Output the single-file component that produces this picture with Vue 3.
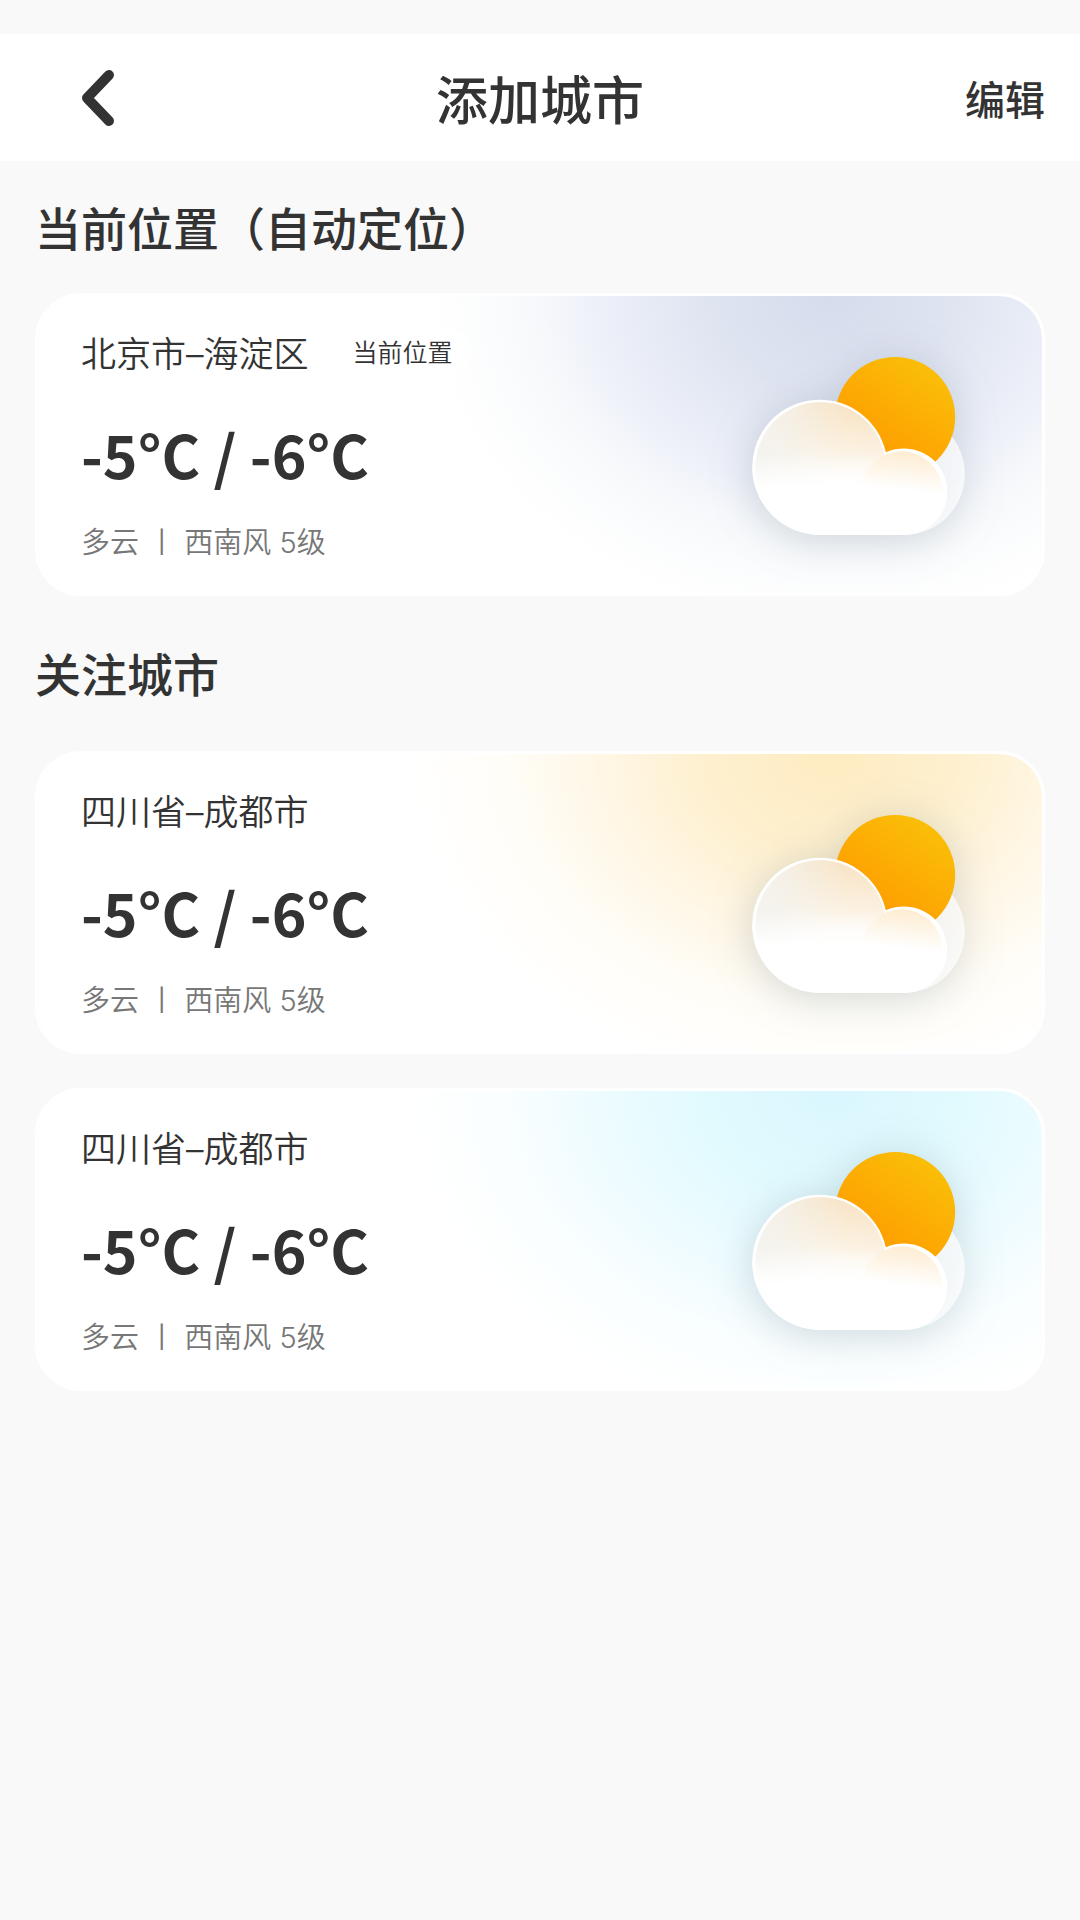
<script setup>
import { ref } from 'vue'

const currentCity = ref({
  id: 1,
  name: '北京市–海淀区',
  temp: '-5°C / -6°C',
  weather: '多云 丨 西南风 5级',
  theme: 'card-gray',
  located: true
})

const followedCities = ref([
  { id: 2, name: '四川省–成都市', temp: '-5°C / -6°C', weather: '多云 丨 西南风 5级', theme: 'card-yellow' },
  { id: 3, name: '四川省–成都市', temp: '-5°C / -6°C', weather: '多云 丨 西南风 5级', theme: 'card-blue' }
])

const sections = [
  { title: '当前位置（自动定位）', cities: [currentCity.value] },
  { title: '关注城市', cities: followedCities.value }
]

const goBack = () => window.history.back()
</script>

<template>
  <div class="page">
    <header class="header">
      <button class="back" aria-label="返回" @click="goBack">
        <svg width="32" height="56" viewBox="0 0 32 56">
          <path d="M27 5 L5 28 L27 51" />
        </svg>
      </button>
      <h1>添加城市</h1>
      <button class="edit">编辑</button>
    </header>

    <main class="content">
      <section v-for="section in sections" :key="section.title" class="section">
        <h2>{{ section.title }}</h2>
        <div class="card-list">
          <article v-for="city in section.cities" :key="city.id" class="card" :class="city.theme">
            <div class="info">
              <div class="city-row">
                <span class="city">{{ city.name }}</span>
                <span v-if="city.located" class="tag">当前位置</span>
              </div>
              <p class="temp">{{ city.temp }}</p>
              <p class="weather">{{ city.weather }}</p>
            </div>

            <svg class="icon" width="212" height="178" viewBox="160 228 635 534" aria-hidden="true">
              <defs>
                <linearGradient :id="'sun' + city.id" x1="0.3" y1="0.9" x2="0.85" y2="0.1">
                  <stop offset="0" stop-color="#ff9900" />
                  <stop offset="1" stop-color="#fabf08" />
                </linearGradient>
                <linearGradient :id="'puff' + city.id" gradientUnits="userSpaceOnUse" x1="450" y1="370" x2="425" y2="620">
                  <stop offset="0" stop-color="#f8e3c4" />
                  <stop offset="0.5" stop-color="#fbf0df" />
                  <stop offset="1" stop-color="#ffffff" />
                </linearGradient>
                <linearGradient :id="'small' + city.id" gradientUnits="userSpaceOnUse" x1="625" y1="505" x2="612" y2="628">
                  <stop offset="0" stop-color="#fdebcf" />
                  <stop offset="1" stop-color="#ffffff" />
                </linearGradient>
                <linearGradient :id="'shade' + city.id" gradientUnits="userSpaceOnUse" x1="170" y1="400" x2="440" y2="440">
                  <stop offset="0" stop-color="#f3f3ef" />
                  <stop offset="1" stop-color="#f3f3ef" stop-opacity="0" />
                </linearGradient>
                <linearGradient :id="'fade' + city.id" gradientUnits="userSpaceOnUse" x1="0" y1="520" x2="0" y2="625">
                  <stop offset="0" stop-color="#ffffff" stop-opacity="0" />
                  <stop offset="1" stop-color="#ffffff" />
                </linearGradient>
              </defs>
              <circle cx="612" cy="579" r="183" fill="#ffffff" fill-opacity="0.7" />
              <circle cx="586" cy="408" r="180" :fill="`url(#sun${city.id})`" />
              <path
                d="M362 762 A203 203 0 1 1 558 514 A130 130 0 1 1 606 762 Z"
                fill="#ffffff"
              />
              <circle cx="362" cy="559" r="195" :fill="`url(#puff${city.id})`" />
              <circle cx="362" cy="559" r="195" :fill="`url(#shade${city.id})`" />
              <circle cx="362" cy="559" r="196" :fill="`url(#fade${city.id})`" />
              <circle cx="606" cy="633" r="122" :fill="`url(#small${city.id})`" />
            </svg>
          </article>
        </div>
      </section>
    </main>
  </div>
</template>

<style>
body {
  background: #f9f9f9;
}
</style>

<style scoped>
.page {
  min-height: 100vh;
  padding-top: 34px;
  box-sizing: border-box;
  background: #f9f9f9;
  color: #333;
  font-family: 'Noto Sans CJK SC', 'Noto Sans', sans-serif;
}

h1, h2, p {
  margin: 0;
}

button {
  padding: 0;
  border: none;
  background: none;
  color: inherit;
  font-family: inherit;
  cursor: pointer;
}

/* 顶部导航 */
.header {
  display: grid;
  grid-template-columns: 1fr auto 1fr;
  align-items: center;
  height: 127px;
  padding: 0 35px;
  background: #fff;
}

.header h1 {
  font-size: 52px;
  line-height: 74px;
  font-weight: 500;
}

.back {
  justify-self: start;
  display: flex;
  padding-left: 47px;
}

.back path {
  fill: none;
  stroke: #333;
  stroke-width: 10;
  stroke-linecap: round;
  stroke-linejoin: round;
}

.edit {
  justify-self: end;
  font-size: 40px;
  line-height: 56px;
  font-weight: 500;
}

.content {
  padding: 0 35px;
}

.section {
  padding-top: 32px;
}

.section h2 {
  margin-bottom: 34px;
  font-size: 46px;
  line-height: 66px;
  font-weight: 500;
}

.section + .section {
  padding-top: 43px;
}

.section + .section h2 {
  margin-bottom: 46px;
}

.card-list {
  display: flex;
  flex-direction: column;
  gap: 34px;
}

/* 城市卡片 */
.card {
  display: flex;
  align-items: center;
  justify-content: space-between;
  padding: 31px 77px 29px 43px;
  border: 3px solid #fff;
  border-radius: 46px;
  background-color: #fff;
  background-clip: padding-box;
}

.card-gray {
  background-image: radial-gradient(40% 110% at 79% 0, #d7dced, #dfe4f1 30%, #eef1f9 60%, #f6f8fb 72%, #fbfcfd 85%, #fff);
}

.card-yellow {
  background-image: radial-gradient(42% 112% at 79% 0, #feebc1, #fef0cf 30%, #fff8ea 60%, #fffdf7 76%, #fff);
}

.card-blue {
  background-image: radial-gradient(42% 112% at 79% 0, #daf6fe, #e1fafe 30%, #f0fcff 60%, #f9feff 76%, #fff);
}

.city-row {
  display: flex;
  align-items: center;
  gap: 26px;
  height: 49px;
}

.city,
.weather {
  font-family: 'Inter', 'Noto Sans CJK SC', sans-serif;
  font-weight: 350;
}

.city {
  font-size: 35px;
}

.tag {
  padding: 0 18px;
  border-radius: 25px;
  background: rgba(255, 255, 255, 0.6);
  font-size: 25px;
  line-height: 49px;
  font-weight: 350;
}

.temp {
  margin: 43px 0 33px;
  font-size: 59px;
  line-height: 70px;
  font-weight: 700;
}

.weather {
  color: #777;
  font-size: 29px;
  line-height: 42px;
}

.icon {
  overflow: visible;
  filter: drop-shadow(0 5px 20px rgba(80, 105, 120, 0.25));
}
</style>
